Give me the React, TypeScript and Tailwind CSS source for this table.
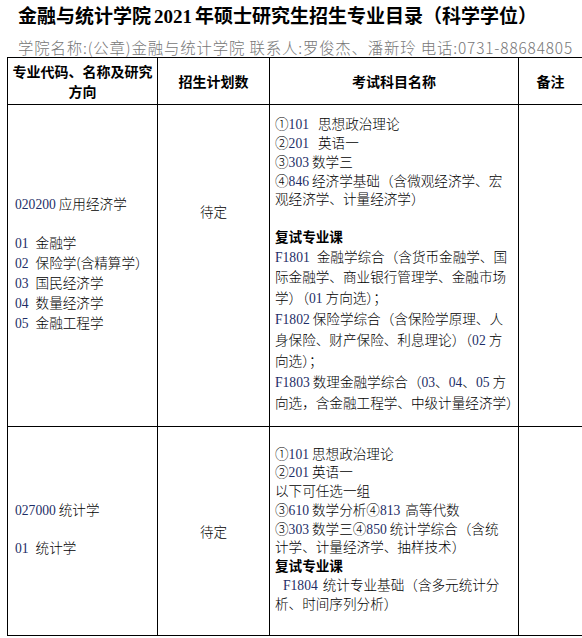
import React from "react";

// 金融与统计学院 2021 硕士招生专业目录 — static table

function Num({ children }: { children: React.ReactNode }) {
  return <span className="font-['Liberation_Serif',serif] text-[#1d2d66]">{children}</span>;
}

// one text line with a fixed box height, so mixed fonts don't grow the line
function L({ h, className = "", children }: { h: string; className?: string; children?: React.ReactNode }) {
  return <div className={`${h} ${className}`}>{children}</div>;
}

function HeadCell({ children }: { children: React.ReactNode }) {
  return (
    <div className="h-[47px] border-r border-b border-black flex items-center justify-center text-center font-bold text-[14px] leading-[20px]">
      {children}
    </div>
  );
}

const A = "h-[18.75px] leading-[18.75px]";
const B = "h-[20.9px] leading-[20.9px]";
const C = "h-[20px] leading-[20px]";
const D = "h-[19px] leading-[19px]";

export default function App() {
  return (
    <div className="w-[582px] h-[638px] overflow-hidden bg-white text-black font-['Noto_Sans_CJK_SC',sans-serif]">
      {/* title */}
      <div className="pl-[18px] pt-[4px] text-[19px] leading-[22px] font-bold whitespace-nowrap">
        金融与统计学院
        <span className="mx-[3px] font-['Liberation_Serif',serif]">2021</span>
        年硕士研究生招生专业目录（科学学位）
      </div>

      {/* subtitle */}
      <div className="pl-[18px] mt-[9px] text-[15.4px] leading-[20px] text-[#777] font-light tracking-[0.85px] whitespace-nowrap">
        学院名称:(公章)金融与统计学院 联系人:罗俊杰、潘新玲 电话:0731-88684805
      </div>

      {/* table */}
      <div className="ml-[7px] w-[576px] border-l border-t border-black grid grid-cols-[150px_112px_249px_64px] text-[13.6px] font-light">
        <HeadCell>
          <div>
            专业代码、名称及研究
            <br />
            方向
          </div>
        </HeadCell>
        <HeadCell>招生计划数</HeadCell>
        <HeadCell>考试科目名称</HeadCell>
        <HeadCell>备注</HeadCell>

        {/* row 1 */}
        <div className="h-[322px] border-r border-b border-black flex flex-col justify-center pl-[7px] pb-[7px] whitespace-nowrap">
          <L h={C}>
            <Num>020200</Num>
            <span className="inline-block w-[3px]" />
            应用经济学
          </L>
          <L h={D} />
          <L h={C}>
            <Num>01</Num>
            <span className="inline-block w-[7px]" />
            金融学
          </L>
          <L h={C}>
            <Num>02</Num>
            <span className="inline-block w-[7px]" />
            保险学(含精算学）
          </L>
          <L h={C}>
            <Num>03</Num>
            <span className="inline-block w-[7px]" />
            国民经济学
          </L>
          <L h={C}>
            <Num>04</Num>
            <span className="inline-block w-[7px]" />
            数量经济学
          </L>
          <L h={C}>
            <Num>05</Num>
            <span className="inline-block w-[7px]" />
            金融工程学
          </L>
        </div>
        <div className="h-[322px] border-r border-b border-black flex justify-center items-start pt-[96px] leading-[20px]">
          待定
        </div>
        <div className="h-[322px] border-r border-b border-black flex flex-col justify-center pl-[5px] pb-[4px] whitespace-nowrap">
          <L h={A}>
            ①<Num>101</Num>
            <span className="inline-block w-[9px]" />
            思想政治理论
          </L>
          <L h={A}>
            ②<Num>201</Num>
            <span className="inline-block w-[9px]" />
            英语一
          </L>
          <L h={A}>
            ③<Num>303</Num>
            <span className="inline-block w-[3px]" />
            数学三
          </L>
          <L h={A}>
            ④<Num>846</Num>
            <span className="inline-block w-[3px]" />
            经济学基础（含微观经济学、宏
          </L>
          <L h={A}>观经济学、计量经济学）</L>
          <L h={A} />
          <L h={A} className="font-bold">
            复试专业课
          </L>
          <L h={B}>
            <Num>F1801</Num>
            <span className="inline-block w-[7px]" />
            金融学综合（含货币金融学、国
          </L>
          <L h={B}>际金融学、商业银行管理学、金融市场</L>
          <L h={B}>
            学）（<Num>01</Num>
            <span className="inline-block w-[3px]" />
            方向选）；
          </L>
          <L h={B}>
            <Num>F1802</Num>
            <span className="inline-block w-[3px]" />
            保险学综合（含保险学原理、人
          </L>
          <L h={B}>
            身保险、财产保险、利息理论）（<Num>02</Num>
            <span className="inline-block w-[3px]" />方
          </L>
          <L h={B}>向选）；</L>
          <L h={B}>
            <Num>F1803</Num>
            <span className="inline-block w-[3px]" />
            数理金融学综合（<Num>03</Num>、<Num>04</Num>、<Num>05</Num>
            <span className="inline-block w-[3px]" />方
          </L>
          <L h={B}>向选，含金融工程学、中级计量经济学）</L>
        </div>
        <div className="h-[322px] border-r border-b border-black" />

        {/* row 2 */}
        <div className="h-[209px] border-r border-b border-black flex flex-col justify-center pl-[7px] pb-[6px] whitespace-nowrap">
          <L h={D}>
            <Num>027000</Num>
            <span className="inline-block w-[3px]" />
            统计学
          </L>
          <L h={D} />
          <L h={D}>
            <Num>01</Num>
            <span className="inline-block w-[7px]" />
            统计学
          </L>
        </div>
        <div className="h-[209px] border-r border-b border-black flex justify-center items-center leading-[20px]">
          待定
        </div>
        <div className="h-[209px] border-r border-b border-black flex flex-col justify-center pl-[5px] pb-[6px] whitespace-nowrap">
          <L h={A}>
            ①<Num>101</Num>
            <span className="inline-block w-[3px]" />
            思想政治理论
          </L>
          <L h={A}>
            ②<Num>201</Num>
            <span className="inline-block w-[3px]" />
            英语一
          </L>
          <L h={A}>以下可任选一组</L>
          <L h={A}>
            ③<Num>610</Num>
            <span className="inline-block w-[3px]" />
            数学分析④<Num>813</Num>
            <span className="inline-block w-[5px]" />
            高等代数
          </L>
          <L h={A}>
            ③<Num>303</Num>
            <span className="inline-block w-[3px]" />
            数学三④<Num>850</Num>
            <span className="inline-block w-[3px]" />
            统计学综合（含统
          </L>
          <L h={A}>计学、计量经济学、抽样技术）</L>
          <L h={A} className="font-bold">
            复试专业课
          </L>
          <L h={A}>
            <span className="inline-block w-[8px]" />
            <Num>F1804</Num>
            <span className="inline-block w-[5px]" />
            统计专业基础（含多元统计分
          </L>
          <L h={A}>析、时间序列分析）</L>
        </div>
        <div className="h-[209px] border-r border-b border-black" />
      </div>
    </div>
  );
}
